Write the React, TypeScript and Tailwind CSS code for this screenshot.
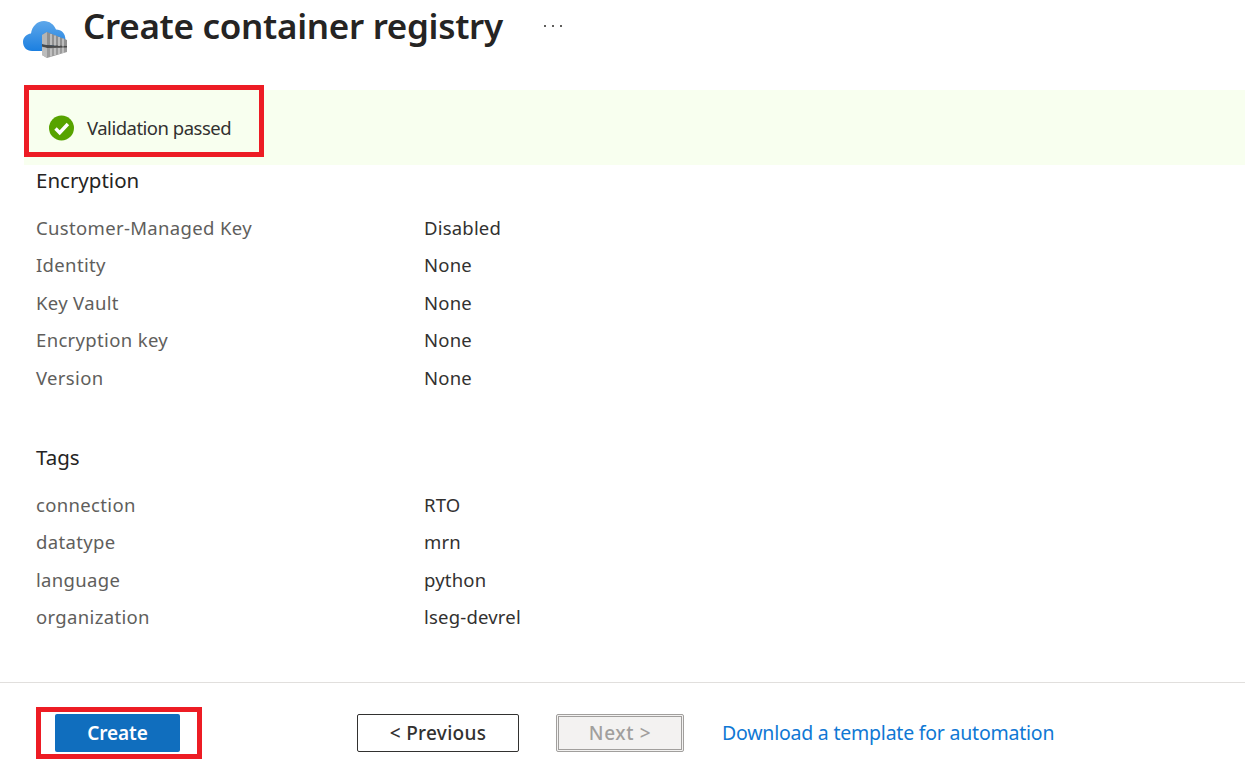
import React from 'react';

// ---- data ----
const encryption = [
  ['Customer-Managed Key', 'Disabled'],
  ['Identity', 'None'],
  ['Key Vault', 'None'],
  ['Encryption key', 'None'],
  ['Version', 'None'],
];

const tags = [
  ['connection', 'RTO'],
  ['datatype', 'mrn'],
  ['language', 'python'],
  ['organization', 'lseg-devrel'],
];

const RegistryIcon = () => (
  <svg width="46" height="42" viewBox="0 0 46 42" className="shrink-0">
    <defs>
      <linearGradient id="cloud" x1="0" y1="0" x2="0" y2="1">
        <stop offset="0" stopColor="#5ea7ea" />
        <stop offset="1" stopColor="#1b7fe0" />
      </linearGradient>
    </defs>
    <path
      d="M10 34C4.500 34 1 30 1 25c0-4.500 3.500-8 8-8.500C10 9.500 15 4 22 4c5.500 0 10 3.500 12 8.500 5.500 0 9.500 4 9.500 10.500S38 34 32 34H10z"
      fill="url(#cloud)"
    />
    {/* containers */}
    <path d="M20 18l5-3 20 8v7l-20-2-5-1z" fill="#8f8f8f" />
    <path d="M20 29l5 1 20-.500V35l-20 6-5-3z" fill="#9b9b9b" />
    <path d="M20 27l5 1 20 1v1.500l-20 .500-5-1.500z" fill="#4a4a4a" />
    <path d="M20 18l5-3v13l-5-1z" fill="#b5b5b5" />
    <path d="M20 30l5 1v10l-5-3z" fill="#bcbcbc" />
    <path
      d="M29 17v11M33 18.500v10M37 20v9M41 21.500v8M29 31.500v8M33 31v7M37 31v6M41 30.500v5.500"
      stroke="#cfcfcf"
      strokeWidth="1.400"
      fill="none"
    />
  </svg>
);

const CheckBadge = () => (
  <svg width="26" height="26" viewBox="0 0 26 26" className="shrink-0">
    <circle cx="12.500" cy="13" r="12.500" fill="#57a300" />
    <path d="M6.500 13.500l4.200 4.200 8.200-8.700" stroke="#fff" strokeWidth="3.400" fill="none" />
  </svg>
);

const Section = ({ title, rows }: { title: string; rows: string[][] }) => (
  <div>
    <h2 className="h-[30px] text-[20.500px] leading-[30px] text-[#252423]">{title}</h2>
    <div className="mt-[14px]">
      {rows.map(([label, value]) => (
        <div key={label} className="flex h-[37.500px] items-center text-[18.500px]">
          <div className="w-[388px] tracking-[0.34px] text-[#605e5c]">{label}</div>
          <div className="tracking-[0.2px] text-[#323130]">{value}</div>
        </div>
      ))}
    </div>
  </div>
);

export default function App() {
  return (
    <div className="relative h-[780px] w-[1245px] overflow-hidden bg-white font-['Noto_Sans','Open_Sans',sans-serif]">
      {/* Title */}
      <header className="flex h-[90px] items-start pl-[22px]">
        <div className="mt-[17px]">
          <RegistryIcon />
        </div>
        <h1 className="ml-[15px] mt-[2px] text-[35px] font-semibold leading-[48px] tracking-[-0.3px] text-[#252423]">
          Create container registry
        </h1>
        <div className="ml-[41px] mt-[25px] flex gap-[6px]">
          <span className="h-[2px] w-[2px] bg-[#605e5c]" />
          <span className="h-[2px] w-[2px] bg-[#605e5c]" />
          <span className="h-[2px] w-[2px] bg-[#605e5c]" />
        </div>
      </header>

      {/* Validation banner */}
      <div className="ml-[24px] flex h-[75px] items-center bg-[#f8ffef] pl-[25px] pt-[1px]">
        <CheckBadge />
        <span className="ml-[12px] text-[18.500px] tracking-[-0.5px] text-[#323130]">Validation passed</span>
      </div>

      <main className="pl-[36px]">
        <Section title="Encryption" rows={encryption} />
        <div className="mt-[45.500px]">
          <Section title="Tags" rows={tags} />
        </div>
      </main>

      {/* Footer */}
      <footer className="absolute inset-x-0 bottom-0 h-[98px] border-t border-[#e1dfdd]">
        <div className="flex items-center pl-[55px] pt-[31px]">
          <button className="h-[38px] w-[125px] rounded-[2px] bg-[#106ebe] text-[19px] font-semibold tracking-[-0.1px] text-white">
            Create
          </button>
          <button className="ml-[177px] h-[38px] w-[162px] rounded-[2px] border border-[#323130] text-[19px] font-medium tracking-[0.3px] text-[#323130]">
            &lt; Previous
          </button>
          <button className="ml-[37px] h-[38px] w-[128px] rounded-[2px] border-[3px] border-double border-[#a19f9d] bg-[#f3f2f1] text-[19px] font-medium tracking-[0.6px] text-[#a19f9d]">
            Next &gt;
          </button>
          <a className="ml-[38px] text-[19.500px] tracking-[-0.22px] text-[#0f78d4]">Download a template for automation</a>
        </div>
      </footer>

      {/* Red annotation boxes */}
      <div className="absolute left-[24px] top-[85px] h-[72px] w-[240px] border-[5px] border-[#ed1c24]" />
      <div className="absolute left-[36px] top-[707px] h-[52px] w-[166px] border-[5px] border-[#ed1c24]" />
    </div>
  );
}
